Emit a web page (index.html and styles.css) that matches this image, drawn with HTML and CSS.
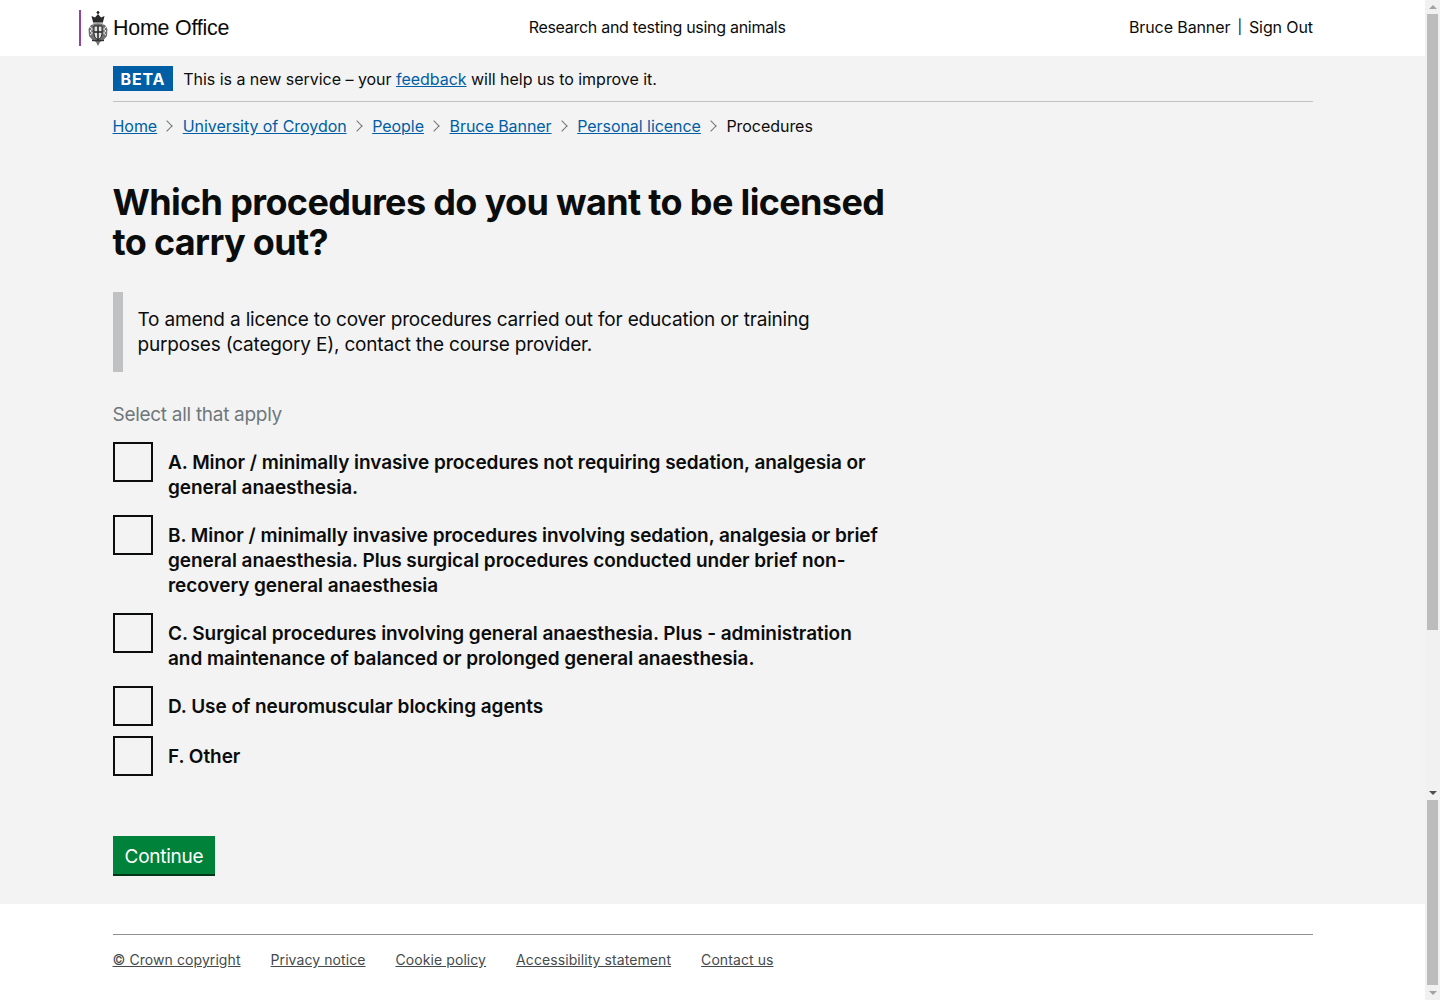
FILE: index.html
```html
<!DOCTYPE html>
<html lang="en">
<head>
<meta charset="utf-8">
<title>Procedures</title>
<link rel="stylesheet" href="styles.css">
</head>
<body>
<div class="page">
  <header class="site-header">
    <a class="logo" href="#">
      <svg class="crest" width="20" height="35" viewBox="0 0 20 35" aria-hidden="true">
        <path d="M10 0 V3" stroke="#222" stroke-width="1.6"/>
        <path d="M8.5 1.5 H11.5" stroke="#222"/>
        <path d="M5 11 L3.5 5 L7 6.5 L10 3 L13 6.5 L16.5 5 L15 11 Z" fill="#2a2a2a"/>
        <rect x="5" y="11" width="10" height="1.6" fill="#888"/>
        <path d="M3 14 Q10 11 17 14 L19.5 18 L19 25 L15.5 29 L12 31 L10 35 L8 31 L4.5 29 L1 25 L.5 18 Z" fill="#707070"/>
        <path d="M6 15 H14 V23 Q14 27 10 29 Q6 27 6 23 Z" fill="#e2e2e2" stroke="#222"/>
        <path d="M10 15 V28 M6 21 H14" stroke="#222" stroke-width="1.5"/>
        <path d="M2 16 L4.5 18 L2 20 L4.5 22 L2 24 M18 16 L15.5 18 L18 20 L15.5 22 L18 24" stroke="#eee" fill="none"/>
        <path d="M4 29.5 H16" stroke="#333" stroke-width="1.4"/>
      </svg>
      <span>Home Office</span>
    </a>
    <div class="service-name">Research and testing using animals</div>
    <div class="user-nav"><span>Bruce Banner</span><span class="sep">|</span><span>Sign Out</span></div>
  </header>

  <main class="main">
    <div class="wrap">
      <div class="phase">
        <strong class="tag">BETA</strong>
        <span class="phase-text">This is a new service – your <a href="#">feedback</a> will help us to improve it.</span>
      </div>
      <nav class="crumbs">
        <a href="#">Home</a><i class="chev"></i>
        <a href="#">University of Croydon</a><i class="chev"></i>
        <a href="#">People</a><i class="chev"></i>
        <a href="#">Bruce Banner</a><i class="chev"></i>
        <a href="#">Personal licence</a><i class="chev"></i>
        <span>Procedures</span>
      </nav>
      <div class="form-col">
        <h1>Which procedures do you want to be licensed to carry out?</h1>
        <div class="inset">To amend a licence to cover procedures carried out for education or training purposes (category E), contact the course provider.</div>
        <div class="hint">Select all that apply</div>
        <div class="options">
          <label class="option"><input type="checkbox"><span>A. Minor / minimally invasive procedures not requiring sedation, analgesia or general anaesthesia.</span></label>
          <label class="option"><input type="checkbox"><span>B. Minor / minimally invasive procedures involving sedation, analgesia or brief general anaesthesia. Plus surgical procedures conducted under brief non-recovery general anaesthesia</span></label>
          <label class="option"><input type="checkbox"><span>C. Surgical procedures involving general anaesthesia. Plus - administration and maintenance of balanced or prolonged general anaesthesia.</span></label>
          <label class="option"><input type="checkbox"><span>D. Use of neuromuscular blocking agents</span></label>
          <label class="option"><input type="checkbox"><span>F. Other</span></label>
        </div>
        <button class="continue" type="button">Continue</button>
      </div>
    </div>
  </main>

  <footer class="site-footer">
    <div class="wrap footer-links">
      <a href="#">© Crown copyright</a>
      <a href="#">Privacy notice</a>
      <a href="#">Cookie policy</a>
      <a href="#">Accessibility statement</a>
      <a href="#">Contact us</a>
    </div>
  </footer>
</div>

<aside class="scrollbar" aria-hidden="true">
  <div class="sb-part sb-top">
    <i class="arrow up"></i>
    <div class="thumb"></div>
    <i class="arrow down dark"></i>
  </div>
  <div class="sb-part sb-bottom">
    <div class="thumb"></div>
    <i class="arrow down"></i>
  </div>
</aside>
</body>
</html>
```
FILE: styles.css
```css
* { box-sizing: border-box; }
html, body { margin: 0; height: 1000px; overflow: hidden; }
body {
  display: flex;
  font-family: Inter, "Liberation Sans", sans-serif;
  color: #0b0c0c;
  background: #fff;
}
a { color: #005ea5; }
.page { flex: 1; min-width: 0; display: flex; flex-direction: column; height: 1000px; }
.wrap { width: 1200px; margin: 0 auto; }

.site-header {
  height: 56px;
  background: #fff;
  display: flex;
  align-items: center;
  justify-content: space-between;
  padding: 0 112px 0 79px;
  font-size: 16px;
}
.logo {
  display: flex;
  align-items: center;
  gap: 5px;
  height: 36px;
  padding-left: 7px;
  border-left: 2px solid #8f44ad;
  color: #0b0c0c;
  text-decoration: none;
  font-family: "Liberation Sans", sans-serif;
  font-size: 21.4px;
  letter-spacing: -0.2px;
}
.crest { flex: none; }
.service-name { margin-right: 44px; padding-bottom: 2px; letter-spacing: -0.29px; }
.user-nav { display: flex; gap: 7px; padding-bottom: 2px; letter-spacing: -0.1px; }
.sep { font-size: 14px; line-height: 20px; }

.main { flex: 1; background: #f3f3f3; padding-top: 10px; }
.phase {
  display: flex;
  align-items: center;
  gap: 10px;
  height: 36px;
  padding-bottom: 11px;
  border-bottom: 1px solid #bfc1c3;
  font-size: 16px;
}
.phase-text { padding-top: 2px; letter-spacing: -0.03px; }
.tag {
  background: #005ea5;
  color: #fff;
  font-weight: 700;
  letter-spacing: 0.8px;
  padding: 0 8px;
  height: 25px;
  line-height: 27px;
}
.crumbs {
  display: flex;
  align-items: center;
  height: 20px;
  margin-top: 14px;
  font-size: 16px;
  letter-spacing: -0.05px;
}
.chev {
  width: 8px;
  height: 8px;
  margin: 0 11.6px 0 6px;
  border-top: 1px solid #6f777b;
  border-right: 1px solid #6f777b;
  transform: rotate(45deg);
}
.form-col { width: 780px; }
h1 {
  margin: 46px 0 0;
  font-size: 36px;
  line-height: 40px;
  font-weight: 650;
  letter-spacing: -0.65px;
}
.inset {
  margin-top: 30px;
  height: 80px;
  padding: 15px 0 15px 15px;
  border-left: 10px solid #bfc1c3;
  font-size: 19px;
  line-height: 25px;
  letter-spacing: -0.18px;
}
.hint {
  margin-top: 30px;
  color: #6f777b;
  font-size: 19px;
  line-height: 25px;
  letter-spacing: -0.29px;
}
.options { margin-top: 15px; display: flex; flex-direction: column; gap: 10px; }
.option {
  display: flex;
  gap: 15.5px;
  font-size: 19px;
  line-height: 25px;
  font-weight: 600;
  letter-spacing: -0.05px;
}
.option input {
  appearance: none;
  flex: none;
  width: 40px;
  height: 40px;
  margin: 0;
  background: transparent;
  border: 2px solid #0b0c0c;
}
.option span { max-width: 715px; padding-top: 8px; padding-bottom: 5px; }
.continue {
  display: block;
  margin-top: 60px;
  height: 40px;
  padding: 4px 12px 0;
  border: 0;
  border-bottom: 2px solid #003618;
  background: #00823b;
  color: #fff;
  font: 400 19px/34px Inter, "Liberation Sans", sans-serif;
  letter-spacing: -0.25px;
}

.site-footer { height: 96px; background: #fff; padding-top: 30px; }
.footer-links {
  display: flex;
  gap: 30px;
  padding-top: 16px;
  border-top: 1px solid #8e9092;
  font-size: 14px;
  line-height: 18px;
  letter-spacing: 0.08px;
}
.footer-links a { color: #454a4c; }

.scrollbar { flex: none; width: 15px; height: 1000px; background: #f1f1f1; display: flex; flex-direction: column; }
.sb-part { display: flex; flex-direction: column; align-items: center; }
.sb-top { height: 800px; padding-top: 5px; }
.sb-top .thumb { width: 11px; height: 616px; margin-top: 5px; background: #bcbcbc; flex: none; }
.sb-top .down { margin-top: auto; margin-bottom: 5px; }
.sb-bottom { height: 200px; }
.sb-bottom .thumb { width: 11px; height: 185px; background: #bcbcbc; flex: none; }
.sb-bottom .down { margin-top: 6px; }
.arrow { width: 0; height: 0; border-left: 4px solid transparent; border-right: 4px solid transparent; flex: none; }
.arrow.up { border-bottom: 4px solid #a3a3a3; }
.arrow.down { border-top: 4px solid #a3a3a3; }
.arrow.down.dark { border-top-color: #505050; }
```
